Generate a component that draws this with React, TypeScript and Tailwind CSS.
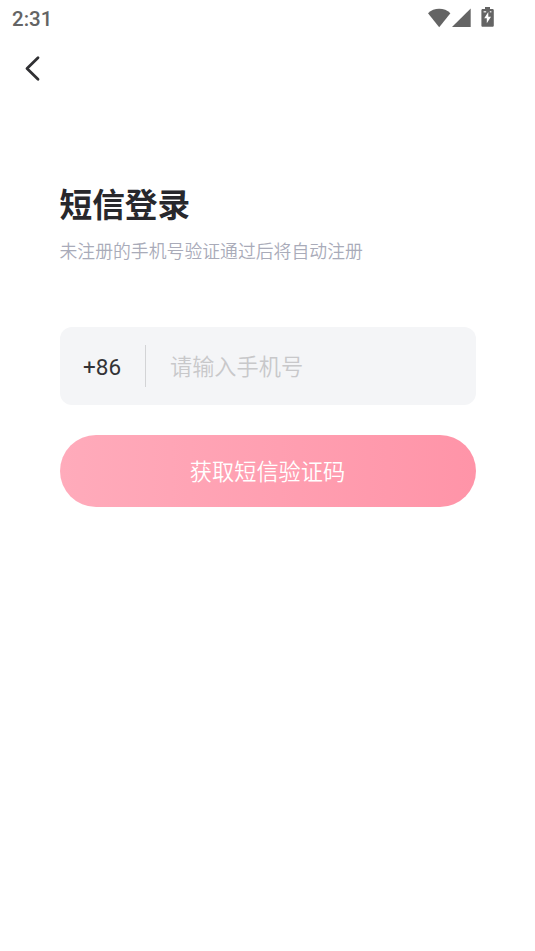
import React from 'react';

const WifiIcon = () => (
  <svg width="24" height="20" viewBox="0 0 24 20" fill="#646464">
    <path d="M12.2 19.2 1 5.2C4 2.2 8 0.8 12.2 0.8s8.2 1.4 11.2 4.4L12.2 19.2Z" />
  </svg>
);

const SignalIcon = () => (
  <svg width="19" height="19" viewBox="0 0 19 19" fill="#646464">
    <path d="M0 19 18.700 0.500V19Z" />
  </svg>
);

const BatteryIcon = () => (
  <svg width="13" height="20" viewBox="0 0 13 20" fill="#646464">
    <path
      fillRule="evenodd"
      d="M4 0h5v2h2.500c.8 0 1.300.6 1.300 1.300v15.200c0 .8-.6 1.300-1.300 1.300h-10C.9 19.800.4 19.200.4 18.500V3.300C.4 2.600.9 2 1.500 2H4ZM7.300 5 3.200 11.300h2.600V16.200L10 9.800H7.300Z"
    />
    <path d="M2.600 4.700h2.600M8.800 4.700h1.600" stroke="#d8d8d8" strokeWidth="1.400" />
  </svg>
);

const StatusBar = () => (
  <div className="flex h-[38px] items-start justify-between pl-3 pr-[41px]">
    <span className="pt-[7px] font-[Roboto] text-[20.500px] font-medium leading-6 text-[#646464]">2:31</span>
    <div className="flex items-start pt-2">
      <WifiIcon />
      <div className="ml-px">
        <SignalIcon />
      </div>
      <div className="-mt-px ml-2.5">
        <BatteryIcon />
      </div>
    </div>
  </div>
);

export default function App() {
  return (
    <div className="h-[951px] w-[535px] overflow-hidden bg-white font-['Noto_Sans_CJK_SC',sans-serif] font-[350]">
      <StatusBar />

      {/* Back button */}
      <button type="button" aria-label="返回" className="ml-6 mt-[17px] block h-[27px] w-4">
        <svg width="16" height="27" viewBox="0 0 16 27" fill="none" stroke="#303033" strokeWidth="2.800">
          <path d="M14 2.800 3 13.500 14 24.200" strokeLinecap="round" strokeLinejoin="round" />
        </svg>
      </button>

      <main className="px-[59.500px] pt-[97px]">
        <h1 className="text-[32.700px] font-bold leading-[48px] text-[#28282c]">短信登录</h1>
        <p className="mt-2 text-[17.850px] leading-[30px] text-[#a9abb9]">未注册的手机号验证通过后将自动注册</p>

        <div className="mt-[62px] flex h-[78px] items-center rounded-xl bg-[#f4f5f7] pl-[23.500px]">
          <span className="w-[62px] pt-[3px] font-[Roboto] text-[22.500px] font-normal text-[#333336]">+86</span>
          <span className="h-[42px] w-px bg-[#d3d4d6]" />
          <input
            type="tel"
            placeholder="请输入手机号"
            className="ml-6 w-[280px] bg-transparent text-[22.200px] text-[#28282e] outline-none placeholder:text-[#c8c8ca]"
          />
        </div>

        <button
          type="button"
          className="mt-[30px] flex h-[72px] w-full items-center justify-center rounded-full bg-linear-to-r from-[#ffabbb] to-[#ff94a8] text-[22.200px] text-white"
        >
          获取短信验证码
        </button>
      </main>
    </div>
  );
}
